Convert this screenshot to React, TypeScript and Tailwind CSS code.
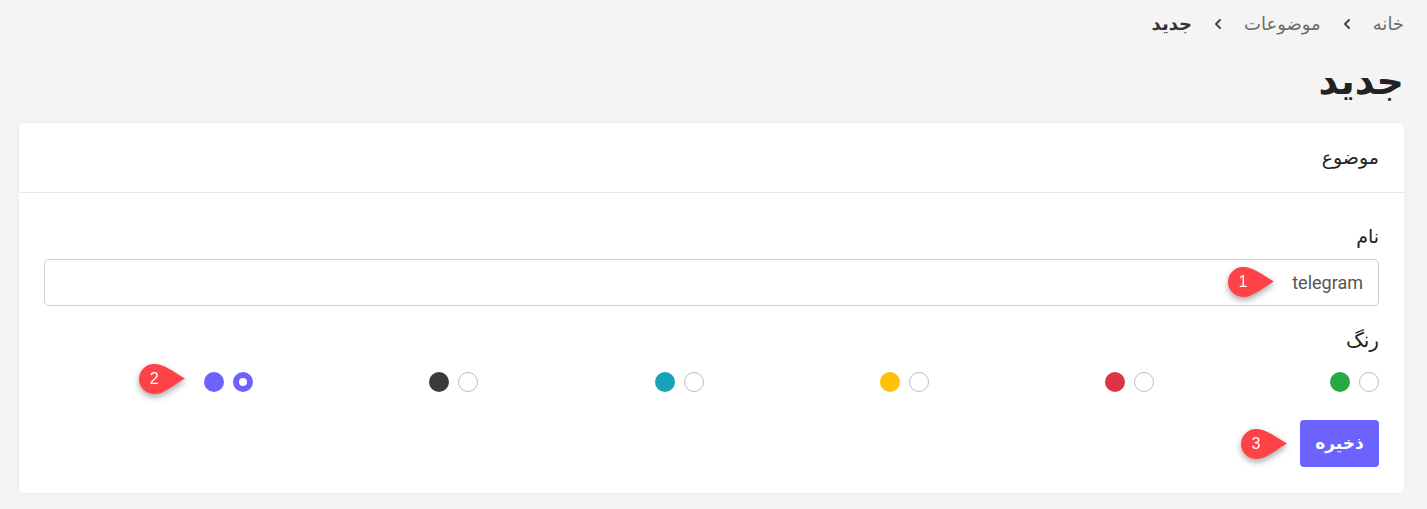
import { ChevronLeft } from "lucide-react";

const colors = [
  { dot: "bg-[#28a745]", checked: false },
  { dot: "bg-[#dc3545]", checked: false },
  { dot: "bg-[#ffc107]", checked: false },
  { dot: "bg-[#17a2b8]", checked: false },
  { dot: "bg-[#3b3b3b]", checked: false },
  { dot: "bg-[#6c63ff]", checked: true },
];

const Marker = ({ n }: { n: number }) => (
  <div className="relative h-[32px] w-[48px] drop-shadow-[0_3px_3px_rgba(0,0,0,0.35)]" dir="ltr">
    <svg width="48" height="32" viewBox="0 0 48 32" className="absolute inset-0">
      <path d="M16 1 C26 1 34 8 47 15.5 C34 23 26 31 16 31 A15 15 0 0 1 16 1 Z" fill="#ff4248" />
    </svg>
    <span className="absolute left-0 top-0 flex h-[32px] w-[32px] items-center justify-center text-[16px] text-white [font-family:'Liberation_Sans',Arial,sans-serif]">
      {n}
    </span>
  </div>
);

export default function App() {
  return (
    <div
      dir="rtl"
      className="min-h-[509px] bg-[#f4f4f4] pl-[19px] pr-[23px] pt-[11px] pb-4 text-[#212529] [font-family:'DejaVu_Sans','Noto_Sans',sans-serif]"
    >
      <nav className="flex items-center gap-[18px] text-[18px] leading-[26px]">
        <span className="text-[#6c6c6c]">خانه</span>
        <ChevronLeft size={16} strokeWidth={3} className="text-[#444]" />
        <span className="text-[#6c6c6c]">موضوعات</span>
        <ChevronLeft size={16} strokeWidth={3} className="text-[#444]" />
        <span className="font-bold text-[#333]">جدید</span>
      </nav>

      <h1 className="mt-[24px] mb-[22px] text-[38px] font-bold leading-[40px] text-[#222]">جدید</h1>

      <div className="rounded-[5px] bg-white shadow-[0_0_6px_rgba(0,0,0,0.04)]">
        <div className="flex h-[70px] items-center border-b border-[#e9e9e9] px-[25px]">
          <h2 className="text-[19px] text-[#222]">موضوع</h2>
        </div>

        <div className="px-[25px] pt-[31px] pb-[26px]">
          <label className="block text-[19px] leading-[24px] text-[#222]">نام</label>
          <div className="relative mt-[11px]">
            <div className="flex h-[47px] items-center rounded-[5px] border border-[#cfcfcf] px-[15px] text-[18px] text-[#555] [font-family:Roboto,'Liberation_Sans',sans-serif]">
              telegram
            </div>
            <div className="absolute right-[104px] top-[7px]">
              <Marker n={1} />
            </div>
          </div>

          <label className="mt-[22px] block text-[20px] leading-[24px] text-[#222]">رنگ</label>
          <div className="mx-[-8px] mt-[20px] grid grid-cols-6">
            {colors.map((c, i) => (
              <div key={i} className="relative flex items-center gap-[9px] px-[8px]">
                {c.checked ? (
                  <span className="h-[20px] w-[20px] rounded-full border-[6px] border-[#6c63ff] bg-white" />
                ) : (
                  <span className="h-[20px] w-[20px] rounded-full border border-[#bdbdbd] bg-white" />
                )}
                <span className={`h-[20px] w-[20px] rounded-full ${c.dot}`} />
                {i === 5 && (
                  <div className="absolute right-[75px] top-[-9px]">
                    <Marker n={2} />
                  </div>
                )}
              </div>
            ))}
          </div>

          <div className="mt-[28px] flex items-center gap-[12px]">
            <button className="h-[47px] w-[79px] rounded-[4px] bg-[#6c63ff] text-[17px] font-bold text-white">
              ذخیره
            </button>
            <Marker n={3} />
          </div>
        </div>
      </div>
    </div>
  );
}
